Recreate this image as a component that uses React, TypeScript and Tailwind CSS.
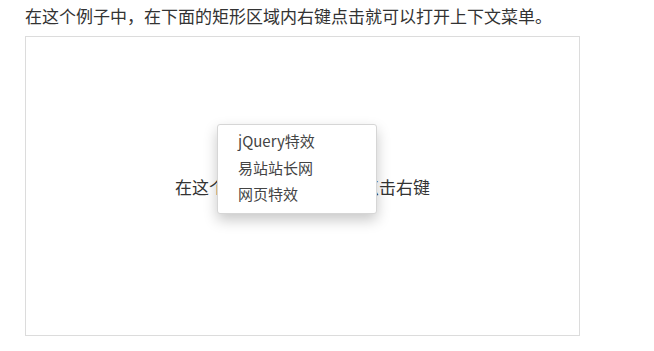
import React from "react";

const items = ["jQuery特效", "易站站长网", "网页特效"];

export default function App() {
  return (
    <div
      className="min-h-[351px] w-[654px] bg-white px-[25px] pt-[4px] text-[#333]"
      style={{ fontFamily: '"Noto Sans CJK SC", "Noto Sans", sans-serif' }}
    >
      <p className="text-[17px] leading-[24px]">
        在这个例子中，在下面的矩形区域内右键点击就可以打开上下文菜单。
      </p>

      {/* context area */}
      <div className="relative mt-[8px] flex h-[300px] w-[555px] items-center justify-center border border-[#dcdcdc] text-[17px]">
        <span className="mt-[2px]">在这个矩形区域内任意处点击右键</span>

        <ul className="absolute left-[191px] top-[87px] w-[160px] rounded-[3px] border border-[#d6d6d6] bg-white pt-[3px] pb-[5px] text-[15px] shadow-[0_6px_14px_rgba(0,0,0,0.22)]">
          {items.map((item) => (
            <li key={item} className="h-[26.5px] px-[20px] leading-[26.5px] text-[#444]">
              {item}
            </li>
          ))}
        </ul>
      </div>
    </div>
  );
}
